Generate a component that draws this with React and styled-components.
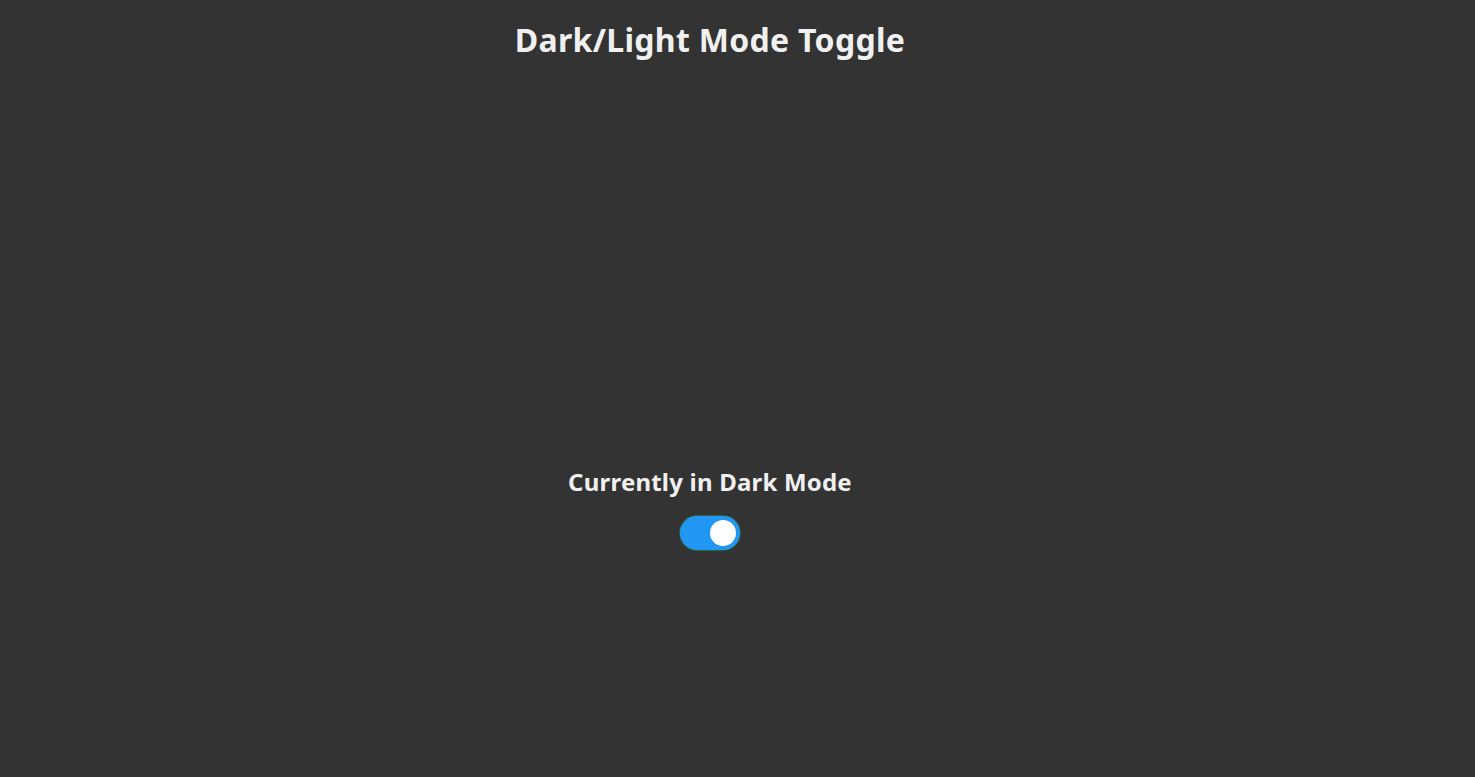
import { useState } from "react";
import styled, { createGlobalStyle } from "styled-components";

const GlobalStyle = createGlobalStyle`
  html, body {
    margin: 0;
    padding: 0;
    background: #333333;
  }

  body {
    font-family: "Noto Sans", "Open Sans", Arial, sans-serif;
    color: #f0f0f0;
  }
`;

export default function App() {
  const [isDark, setIsDark] = useState(true);

  return (
    <>
      <GlobalStyle />
      <Page>
        <Title>Dark/Light Mode Toggle</Title>
        <Main>
          <Status>Currently in {isDark ? "Dark" : "Light"} Mode</Status>
          <Switch>
            <HiddenInput
              type="checkbox"
              checked={isDark}
              onChange={() => setIsDark(!isDark)}
            />
            <Slider $on={isDark}>
              <Knob />
            </Slider>
          </Switch>
        </Main>
      </Page>
    </>
  );
}

const Page = styled.div`
  width: 1420px;
  min-height: 100vh;
  display: flex;
  flex-direction: column;
  align-items: center;
`;

const Title = styled.h1`
  margin: 18px 0 0;
  font-size: 32px;
  font-weight: 700;
  line-height: 44px;
  letter-spacing: 0.3px;
`;

const Main = styled.main`
  padding-top: 403px;
  display: flex;
  flex-direction: column;
  align-items: center;
  gap: 18px;
`;

const Status = styled.h2`
  margin: 0;
  font-size: 24px;
  font-weight: 700;
  line-height: 33px;
  letter-spacing: 0.2px;
`;

const Switch = styled.label`
  display: block;
  cursor: pointer;
`;

const HiddenInput = styled.input`
  display: none;
`;

const Slider = styled.span`
  box-sizing: border-box;
  width: 60px;
  height: 34px;
  padding: 4px;
  border-radius: 34px;
  display: flex;
  justify-content: ${(p) => (p.$on ? "flex-end" : "flex-start")};
  background: ${(p) => (p.$on ? "#2196f3" : "#cccccc")};
  box-shadow: 0 0 1px 0.5px #2e8b57;
  transition: 0.3s;
`;

const Knob = styled.span`
  width: 26px;
  height: 26px;
  border-radius: 50%;
  background: #ffffff;
`;
